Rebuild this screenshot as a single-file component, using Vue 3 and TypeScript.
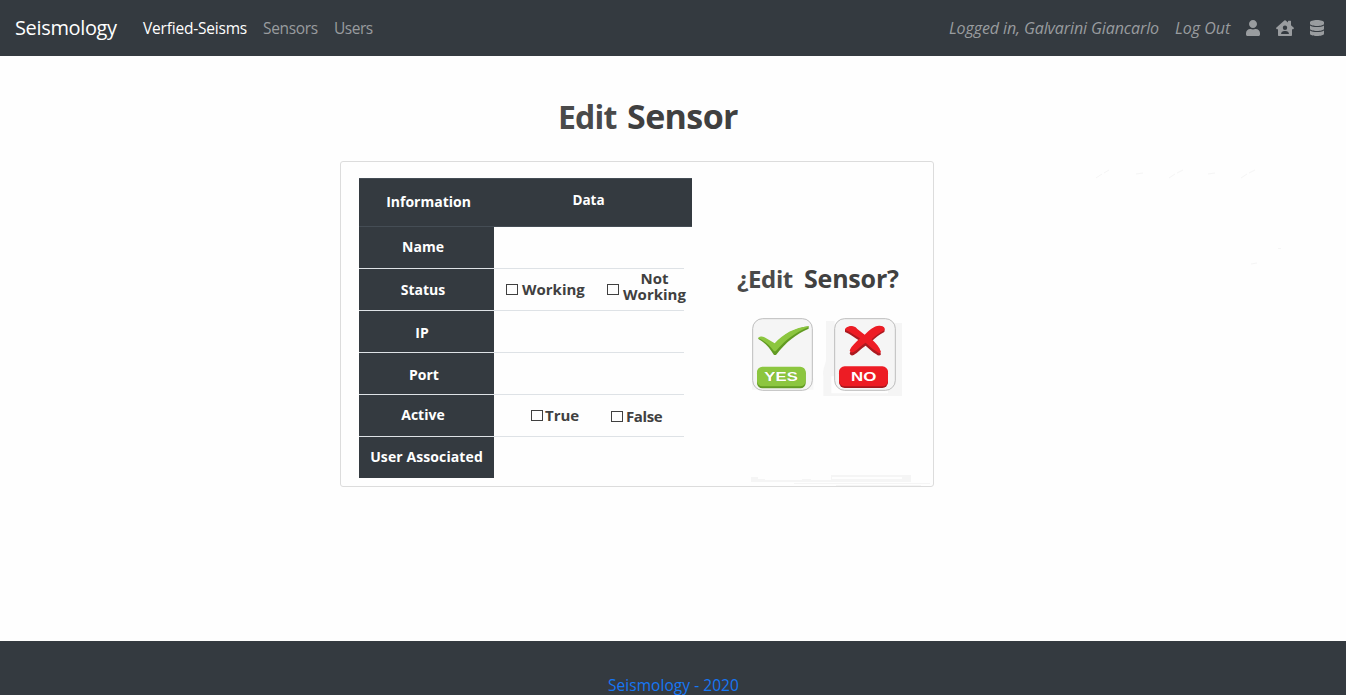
<script setup lang="ts">
interface Option {
  label: string
  cls: string
}
interface Row {
  label: string
  cls: string
  options: Option[]
}

const rows: Row[] = [
  { label: 'Name', cls: 'name', options: [] },
  {
    label: 'Status',
    cls: 'status',
    options: [
      { label: 'Working', cls: 'working' },
      { label: 'Not Working', cls: 'not-working' },
    ],
  },
  { label: 'IP', cls: 'ip', options: [] },
  { label: 'Port', cls: 'port', options: [] },
  {
    label: 'Active',
    cls: 'active-row',
    options: [
      { label: 'True', cls: 'true' },
      { label: 'False', cls: 'false' },
    ],
  },
  { label: 'User Associated', cls: 'user', options: [] },
]
</script>

<template>
  <div class="page">
    <nav class="navbar">
      <a class="brand">Seismology</a>
      <a class="link current">Verfied-Seisms</a>
      <a class="link sensors">Sensors</a>
      <a class="link users">Users</a>
      <span class="spacer"></span>
      <em class="link logged">Logged in, Galvarini Giancarlo</em>
      <em class="link logout">Log Out</em>
      <svg class="icon" width="14" height="16" viewBox="0 0 448 512">
        <path d="M224 256c70.7 0 128-57.3 128-128S294.7 0 224 0 96 57.3 96 128s57.3 128 128 128zm89.6 32h-16.7c-22.2 10.2-46.9 16-72.9 16s-50.6-5.8-72.9-16h-16.7C60.2 288 0 348.2 0 422.4V464c0 26.5 21.5 48 48 48h352c26.5 0 48-21.5 48-48v-41.6c0-74.2-60.2-134.4-134.4-134.4z" />
      </svg>
      <svg class="icon house" width="18" height="16" viewBox="0 0 18 16">
        <path fill-rule="evenodd" d="M8.3.5a1 1 0 0 1 1.4 0L12 2.5V1.3c0-.3.2-.5.5-.5h2c.3 0 .5.2.5.5v4l2.8 2.5c.3.3.2.6 0 .8l-.7.7c-.2.2-.5.2-.8 0L16 9v6c0 .6-.4 1-1 1H3c-.6 0-1-.4-1-1V9l-.4.3c-.2.2-.5.2-.8 0l-.6-.7c-.2-.2-.2-.5 0-.8zM9 5.6a2.2 2.2 0 1 0 0 4.4 2.2 2.2 0 0 0 0-4.4zM8 11a3 3 0 0 0-3 2.6c0 .3.2.4.5.4h7c.3 0 .5-.1.5-.4A3 3 0 0 0 10 11z" />
      </svg>
      <svg class="icon database" width="14" height="16" viewBox="0 0 448 512">
        <path d="M448 73.143v45.714C448 159.143 347.667 192 224 192S0 159.143 0 118.857V73.143C0 32.857 100.333 0 224 0s224 32.857 224 73.143zM448 176v102.857C448 319.143 347.667 352 224 352S0 319.143 0 278.857V176c48.125 33.143 136.208 48.572 224 48.572S399.874 209.143 448 176zm0 160v102.857C448 479.143 347.667 512 224 512S0 479.143 0 438.857V336c48.125 33.143 136.208 48.572 224 48.572S399.874 369.143 448 336z" />
      </svg>
    </nav>

    <main class="content">
      <h1 class="title"><span class="edit">Edit</span><span class="sensor">Sensor</span></h1>

      <section class="card">
        <div class="table">
          <div class="head">
            <div class="head-cell information"><span>Information</span></div>
            <div class="head-cell data"><span>Data</span></div>
          </div>
          <div v-for="row in rows" :key="row.label" class="row" :class="row.cls">
            <div class="key"><span>{{ row.label }}</span></div>
            <div class="value">
              <label v-for="option in row.options" :key="option.label" class="option" :class="option.cls">
                <i class="box"></i><span>{{ option.label }}</span>
              </label>
            </div>
          </div>
        </div>

        <div class="confirm">
          <h2 class="question"><span class="q-edit">¿Edit</span><span class="q-sensor">Sensor?</span></h2>
          <svg class="answers" width="175" height="95" viewBox="0 0 525 285">
            <path d="M36 205h184v34H36z" fill="#f7f7f7" />
            <rect x="38" y="26" width="179" height="215" rx="30" fill="#f5f5f5" stroke="#bdbdbd" stroke-width="3" />
            <path d="M54 86c8-8 16-5 22 0l28 18c27-30 60-50 102-55v7c-35 15-67 38-98 79h-6c-12-20-25-36-48-49z" fill="#629b23" />
            <path d="M54 84c8-7 16-5 22-1l28 17c27-29 60-47 102-51v2c-37 15-68 36-99 73h-5c-12-17-25-30-48-40z" fill="#8cc63f" />
            <rect x="51" y="174" width="146" height="61" rx="16" fill="#629b23" />
            <rect x="51" y="170" width="146" height="59" rx="16" fill="#8cc63f" />
            <text x="75" y="214" textLength="100" lengthAdjust="spacingAndGlyphs" class="answer yes-shadow">YES</text>
            <text x="73" y="214" textLength="101" lengthAdjust="spacingAndGlyphs" class="answer">YES</text>

            <path d="M258 33h26v166h-10v51h170V39h42v219H250v-60c-4-20 8-35 8-50z" fill="#f5f5f5" />
            <rect x="284" y="26" width="182" height="215" rx="30" fill="#f5f5f5" stroke="#bdbdbd" stroke-width="3" />
            <path d="M315 66v-8c10-13 31-10 36 1l23 19c17-15 31-31 49-29 9 1 13 10 10 17-15 8-27 17-38 28 13 12 24 24 28 39-3 5-9 5-14 0-12-7-22-18-32-26-14 9-23 20-36 28-6 3-11 0-12-5 6-15 18-26 31-37-17-10-29-21-45-27z" fill="#ac1a20" />
            <path d="M315 59c5-14 29-14 36-3l23 18c17-15 31-30 49-26 9 1 13 6 10 13-15 8-27 17-38 27 13 12 24 24 28 38-3 5-9 3-14-2-12-7-22-18-32-26-14 9-23 20-36 28-6 3-11 0-12-5 6-13 18-24 31-36-17-9-29-20-45-26z" fill="#ed1c24" />
            <rect x="297" y="173" width="147" height="61" rx="17" fill="#a8181e" />
            <rect x="297" y="169" width="147" height="60" rx="17" fill="#ed1c24" />
            <text x="333" y="214" textLength="76" lengthAdjust="spacingAndGlyphs" class="answer">NO</text>
          </svg>
          <svg class="traces" width="182" height="12" viewBox="0 0 182 12">
            <path fill="#f5f5f5" d="M0 2h7v2h7v1h37v-1h9v1h20V0h80v7H0zM81 2v2h70V2zM43 8h136v1H43zM85 10h85v1H85z" fill-rule="evenodd" />
          </svg>
        </div>
      </section>

      <svg class="specks" width="190" height="110" viewBox="0 0 190 110">
        <path d="M0 9l6-4m2-1l5-3M40 5l7-1M73 9l6-4m2-1l6-3M112 5l7-1M145 9l6-4m2-1l6-3M182 79.500h3M155 95l6-1" />
      </svg>
    </main>

    <footer class="footer"><a>Seismology - 2020</a></footer>
  </div>
</template>

<style>
body {
  margin: 0;
  overflow: hidden;
}
</style>

<style scoped>
.page {
  display: flex;
  flex-direction: column;
  height: 695px;
  overflow: hidden;
  background: #fefefe;
  color: #404040;
  font-family: 'Open Sans', 'Noto Sans', sans-serif;
}
.navbar {
  display: flex;
  align-items: center;
  box-sizing: border-box;
  flex: none;
  height: 56px;
  padding: 0 22px 0 15px;
  background: #343a40;
  white-space: nowrap;
}
.brand {
  width: 128px;
  color: #fff;
  font-size: 20px;
  letter-spacing: -0.35px;
  line-height: 30px;
}
.link {
  color: #999c9f;
  font-size: 15.5px;
  letter-spacing: -0.2px;
  line-height: 24px;
}
.current {
  width: 120px;
  color: #fff;
}
.sensors {
  width: 71px;
  letter-spacing: -0.35px;
}
.users {
  letter-spacing: -0.5px;
}
.spacer {
  flex: 1;
}
.logged {
  width: 226px;
  font-size: 16px;
  letter-spacing: -0.1px;
}
.logout {
  width: 71px;
  font-size: 16px;
  letter-spacing: 0;
}
.icon {
  flex: none;
  fill: #999c9f;
}
.house {
  margin-left: 16px;
}
.database {
  margin-left: 16px;
}
.content {
  position: relative;
  flex: 1;
}
.title {
  display: flex;
  align-items: baseline;
  height: 60px;
  margin: 30px 0 0 558px;
  line-height: 60px;
  white-space: nowrap;
}
.edit {
  width: 69px;
  color: #4a4a4a;
  font-size: 32px;
  font-weight: 700;
  letter-spacing: -0.8px;
}
.sensor {
  font-size: 34px;
  font-weight: 700;
  letter-spacing: -0.6px;
}
.card {
  display: flex;
  box-sizing: border-box;
  width: 594px;
  height: 326px;
  margin: 15px 0 0 340px;
  padding: 16px 0 0 18px;
  border: 1px solid #dcdcdc;
  border-radius: 3px;
}
.table {
  width: 333px;
  font-size: 14px;
  font-weight: 700;
  line-height: 20px;
  white-space: nowrap;
}
.head {
  display: flex;
  box-sizing: border-box;
  height: 49px;
  border-top: 1px solid #454d55;
  border-bottom: 1px solid #454d55;
  background: #343a40;
  color: #fff;
}
.head-cell {
  display: flex;
  align-items: center;
  justify-content: center;
}
.information {
  width: 139px;
  padding-bottom: 2px;
}
.data {
  width: 181px;
  padding-bottom: 5px;
  font-size: 13.500px;
}
.row {
  display: flex;
  width: 325px;
  height: 42px;
}
.key {
  display: flex;
  align-items: center;
  justify-content: center;
  box-sizing: border-box;
  width: 135px;
  padding-bottom: 2px;
  border-bottom: 1px solid #dee2e6;
  background: #343a40;
  color: #fff;
}
.value {
  display: flex;
  align-items: center;
  box-sizing: border-box;
  width: 190px;
  border-bottom: 1px solid #dee2e6;
}
.name .key,
.status .key,
.active-row .key {
  padding-right: 7px;
}
.status .key {
  padding-bottom: 0;
}
.ip .key,
.port .key {
  padding-top: 2px;
  padding-bottom: 0;
}
.ip .key {
  padding-right: 9px;
}
.port .key {
  padding-right: 5px;
}
.user {
  height: 41px;
}
.user .key,
.user .value {
  border-bottom: 0;
}
.user .key {
  letter-spacing: 0.1px;
}
.option {
  display: flex;
  flex: none;
  align-items: center;
  font-size: 15px;
  font-weight: 700;
}
.box {
  box-sizing: border-box;
  width: 12px;
  height: 11px;
  border: 1px solid #404040;
}
.working {
  width: 101px;
  margin-left: 12px;
}
.working span {
  margin-left: 4px;
  padding-bottom: 1px;
}
.not-working span {
  width: 65px;
  margin-left: 3px;
  padding-bottom: 8px;
  line-height: 16px;
  text-align: center;
  white-space: normal;
}
.true {
  width: 80px;
  margin-left: 37px;
}
.true span {
  margin-left: 2px;
  padding-bottom: 2px;
}
.false {
  padding-top: 2px;
}
.false span {
  margin-left: 3px;
  padding-bottom: 2px;
  letter-spacing: -0.4px;
}
.confirm {
  display: flex;
  flex: 1;
  flex-direction: column;
}
.question {
  display: flex;
  align-items: baseline;
  height: 40px;
  margin: 80px 0 0 45px;
  line-height: 40px;
  white-space: nowrap;
}
.q-edit {
  width: 67px;
  color: #4a4a4a;
  font-size: 24px;
  font-weight: 700;
  letter-spacing: -0.4px;
}
.q-sensor {
  font-size: 25px;
  font-weight: 700;
  letter-spacing: -0.2px;
}
.answers {
  flex: none;
  margin: 12px 0 0 48px;
}
.answer {
  fill: #fff;
  font-family: 'Liberation Sans', sans-serif;
  font-size: 38px;
  font-weight: 700;
}
.yes-shadow {
  fill: #629b23;
}
.traces {
  flex: none;
  margin: 70px 0 0 59px;
}
.specks {
  position: absolute;
  top: 113px;
  left: 1096px;
  fill: none;
  stroke: #f5f5f5;
}
.footer {
  box-sizing: border-box;
  flex: none;
  height: 54px;
  padding: 32px 0 0 608px;
  background: #343a40;
  color: #1677f5;
  font-size: 15.5px;
  letter-spacing: 0.05px;
  line-height: 24px;
  white-space: nowrap;
}
</style>
